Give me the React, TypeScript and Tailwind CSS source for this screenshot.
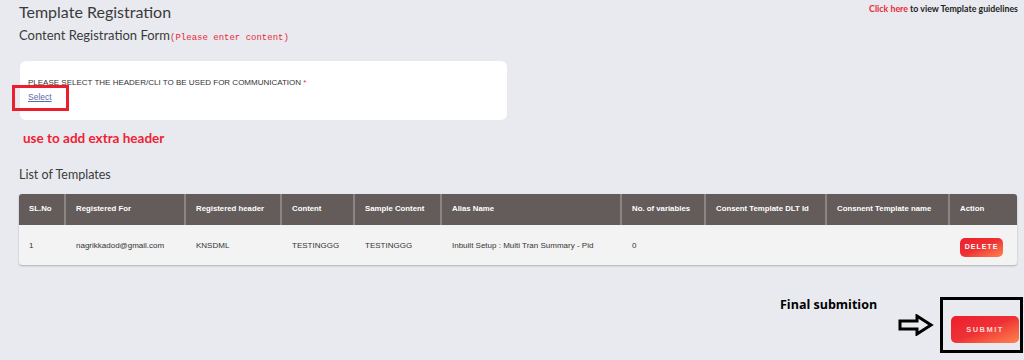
import React from "react";

const COLUMNS = [
  { label: "SL.No", w: "w-[47px]" },
  { label: "Registered For", w: "w-[120px]" },
  { label: "Registered header", w: "w-[96px]" },
  { label: "Content", w: "w-[73px]" },
  { label: "Sample Content", w: "w-[87px]" },
  { label: "Alias Name", w: "w-[180px]" },
  { label: "No. of variables", w: "w-[84px]" },
  { label: "Consent Template DLT Id", w: "w-[121px]" },
  { label: "Consnent Template name", w: "w-[123px]" },
  { label: "Action", w: "w-[67px]" },
];

const ROW = [
  "1",
  "nagrikkadod@gmail.com",
  "KNSDML",
  "TESTINGGG",
  "TESTINGGG",
  "Inbuilt Setup : Multi Tran Summary - Pid",
  "0",
  "",
  "",
];

function ArrowIcon() {
  return (
    <svg width="36" height="22" viewBox="0 0 36 22">
      <path
        d="M2 7 H19 V2 L33 11 L19 20 V15 H2 Z"
        fill="none"
        stroke="#000"
        strokeWidth="3"
        strokeLinejoin="miter"
      />
    </svg>
  );
}

export default function App() {
  return (
    <div className="relative h-[360px] w-[1024px] overflow-hidden bg-[#e8eaef] font-['Lato',sans-serif]">
      {/* header */}
      <div className="flex items-start justify-between pl-[19px] pr-[6px] pt-[2px]">
        <h1 className="text-[16px] leading-[20px] text-[#3b3b3b]">Template Registration</h1>
        <p className="pt-[2px] text-[8.8px] font-bold leading-[10px] text-[#222]">
          <span className="text-[#e8283a]">Click here</span> to view Template guidelines
        </p>
      </div>
      <div className="mt-[5px] flex items-baseline pl-[19px]">
        <span className="text-[13px] leading-[17px] text-[#3b3b3b]">Content Registration Form</span>
        <span className="font-['Liberation_Mono',monospace] text-[9px] text-[#e8283a]">(Please enter content)</span>
      </div>

      {/* form card */}
      <div className="ml-[20px] mt-[15px] flex h-[59px] w-[487px] flex-col items-start rounded-[6px] bg-white pl-[8px] pt-[17px] font-['Liberation_Sans',sans-serif]">
        <p className="text-[8px] leading-[10px] text-[#333]">
          PLEASE SELECT THE HEADER/CLI TO BE USED FOR COMMUNICATION <span className="text-[#e8283a]">*</span>
        </p>
        <a className="mt-[4px] text-[8.5px] leading-[10px] text-[#5a6aa8] underline">Select</a>
      </div>
      <p className="ml-[23px] mt-[8px] text-[13.5px] font-bold leading-[20px] text-[#ee2233]">use to add extra header</p>

      <h2 className="ml-[19px] mt-[19px] text-[12.5px] leading-[16px] text-[#3b3b3b]">List of Templates</h2>

      {/* table */}
      <div className="ml-[19px] mt-[11px] w-[998px] overflow-hidden rounded-[3px] bg-[#f3f3f3] font-['Liberation_Sans',sans-serif] shadow-[0_1px_2px_rgba(0,0,0,0.25)]">
        <div className="flex h-[31px] bg-[#645c5a]">
          {COLUMNS.map((c, i) => (
            <div
              key={c.label}
              className={`${c.w} flex items-center pl-[10px] text-[7.8px] font-bold text-white ${
                i < COLUMNS.length - 1 ? "border-r-2 border-[#8a8583]" : ""
              }`}
            >
              {c.label}
            </div>
          ))}
        </div>
        <div className="flex h-[40px] items-center">
          {ROW.map((v, i) => (
            <div key={i} className={`${COLUMNS[i].w} pl-[10px] pt-[2px] text-[8px] text-[#333]`}>
              {v}
            </div>
          ))}
          <div className={`${COLUMNS[9].w} pl-[10px]`}>
            <button className="h-[19px] w-[43px] rounded-[5px] bg-gradient-to-br from-[#ee1d2d] via-[#ee3135] to-[#ff8050] text-[7px] font-bold tracking-[1px] text-white">
              DELETE
            </button>
          </div>
        </div>
      </div>

      {/* submit area */}
      <div className="mt-[32px] flex items-start pl-[780px]">
        <p className="font-['Open_Sans',sans-serif] text-[12.5px] font-bold leading-[16px] text-black">Final submition</p>
      </div>
      <div className="absolute left-[898px] top-[314px]">
        <ArrowIcon />
      </div>
      <div className="absolute left-[940px] top-[297px] h-[56px] w-[83px] border-[3px] border-black">
        <button className="ml-[8px] mt-[16px] h-[27px] w-[68px] rounded-[5px] bg-gradient-to-br from-[#ee1d2d] via-[#ee3135] to-[#ff8050] font-['Liberation_Sans',sans-serif] text-[7.5px] font-bold tracking-[1.5px] text-[#ffd6d6]">
          SUBMIT
        </button>
      </div>

      {/* annotation around select */}
      <div className="absolute left-[12px] top-[85px] h-[26px] w-[57px] border-[3px] border-[#ee1d2d]" />
    </div>
  );
}
